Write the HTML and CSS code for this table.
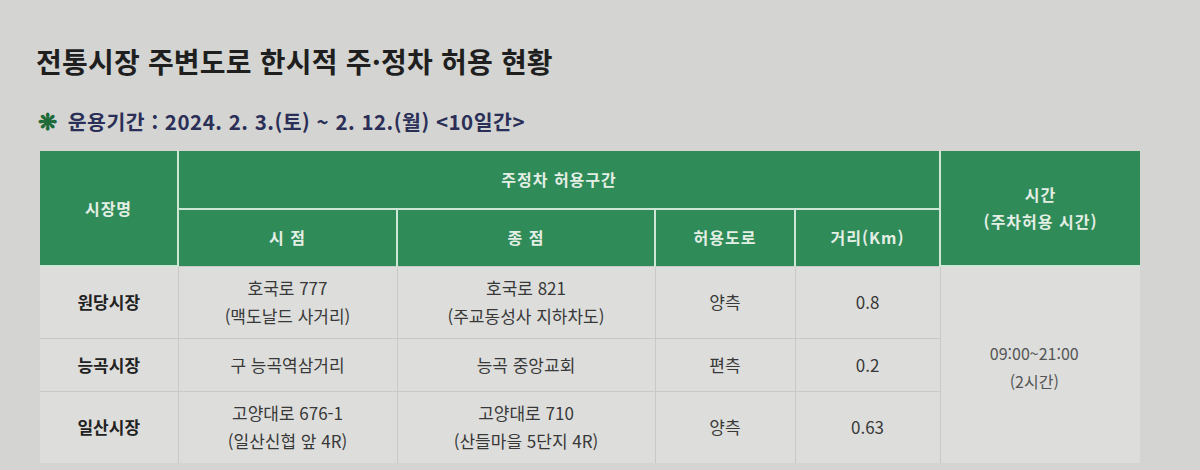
FILE: index.html
```html
<!DOCTYPE html>
<html lang="ko">
<head>
<meta charset="utf-8">
<link rel="stylesheet" href="styles.css">
</head>
<body>
<div class="page">
  <h1 class="title">전통시장 주변도로 한시적 주·정차 허용 현황</h1>
  <p class="period"><span class="mark">❋</span> 운용기간 : 2024. 2. 3.(토) ~ 2. 12.(월) &lt;10일간&gt;</p>
  <table class="grid">
    <colgroup>
      <col class="c-name"><col class="c-start"><col class="c-end"><col class="c-road"><col class="c-dist"><col class="c-time">
    </colgroup>
    <thead>
      <tr class="h1">
        <th rowspan="2">시장명</th>
        <th colspan="4">주정차 허용구간</th>
        <th rowspan="2">시간<br>(주차허용 시간)</th>
      </tr>
      <tr class="h2">
        <th>시 점</th>
        <th>종 점</th>
        <th>허용도로</th>
        <th>거리(Km)</th>
      </tr>
    </thead>
    <tbody>
      <tr class="r1">
        <td class="name">원당시장</td>
        <td>호국로 777<br>(맥도날드 사거리)</td>
        <td>호국로 821<br>(주교동성사 지하차도)</td>
        <td>양측</td>
        <td>0.8</td>
        <td rowspan="3" class="time">09:00~21:00<br>(2시간)</td>
      </tr>
      <tr class="r2">
        <td class="name">능곡시장</td>
        <td>구 능곡역삼거리</td>
        <td>능곡 중앙교회</td>
        <td>편측</td>
        <td>0.2</td>
      </tr>
      <tr class="r3">
        <td class="name">일산시장</td>
        <td>고양대로 676-1<br>(일산신협 앞 4R)</td>
        <td>고양대로 710<br>(산들마을 5단지 4R)</td>
        <td>양측</td>
        <td>0.63</td>
      </tr>
    </tbody>
  </table>
</div>
</body>
</html>
```
FILE: styles.css
```css
html, body {
  margin: 0;
  padding: 0;
  background: #d4d5d2;
}
body {
  font-family: "Noto Sans CJK KR", "Noto Sans", sans-serif;
  color: #2a2a2a;
  width: 1200px;
  height: 470px;
  overflow: hidden;
}
.page {
  padding: 41px 0 0 36px;
}
.title {
  margin: 0;
  font-size: 28px;
  font-weight: 700;
  line-height: 40px;
  color: #1f1f1f;
  letter-spacing: 0.2px;
}
.period {
  margin: 25px 0 0 2px;
  font-size: 20.5px;
  font-weight: 700;
  line-height: 28px;
  color: #2b2f58;
  letter-spacing: 0.5px;
}
.mark {
  color: #1e6b3a;
  font-size: 23px;
  margin-right: 4px;
}
.grid {
  margin: 16px 0 0 4px;
  width: 1100px;
  border-collapse: collapse;
  table-layout: fixed;
}
.c-name { width: 138px; }
.c-start { width: 219px; }
.c-end { width: 258px; }
.c-road { width: 140px; }
.c-dist { width: 145px; }
.c-time { width: 200px; }
.grid th {
  background: #2f8b58;
  color: #e3eee5;
  font-size: 16px;
  font-weight: 700;
  letter-spacing: 1px;
  border: 2px solid #cfe6d7;
  line-height: 27px;
  padding: 0;
}
.grid thead tr.h1 th:first-child { border-left: none; }
.grid thead tr.h1 th { border-top: none; }
.grid thead tr.h1 th:last-child { border-right: none; }
.grid thead tr.h2 th { border-bottom: none; }
.h1 { height: 58px; }
.h2 { height: 57px; }
.grid td {
  background: #dddedc;
  text-align: center;
  font-size: 17px;
  line-height: 28px;
  color: #383838;
  border: 1px solid #c9cac7;
  padding: 0;
}
.grid td.name {
  font-weight: 700;
  color: #222;
  border-left: none;
}
.grid tbody tr.r3 td { border-bottom: none; }
.grid td.time {
  color: #555;
  font-size: 16px;
  border-right: none;
  border-bottom: none;
  padding: 4px 12px 0 0;
}
.r1 { height: 72px; }
.r2 { height: 53px; }
.r3 { height: 72px; }
```
